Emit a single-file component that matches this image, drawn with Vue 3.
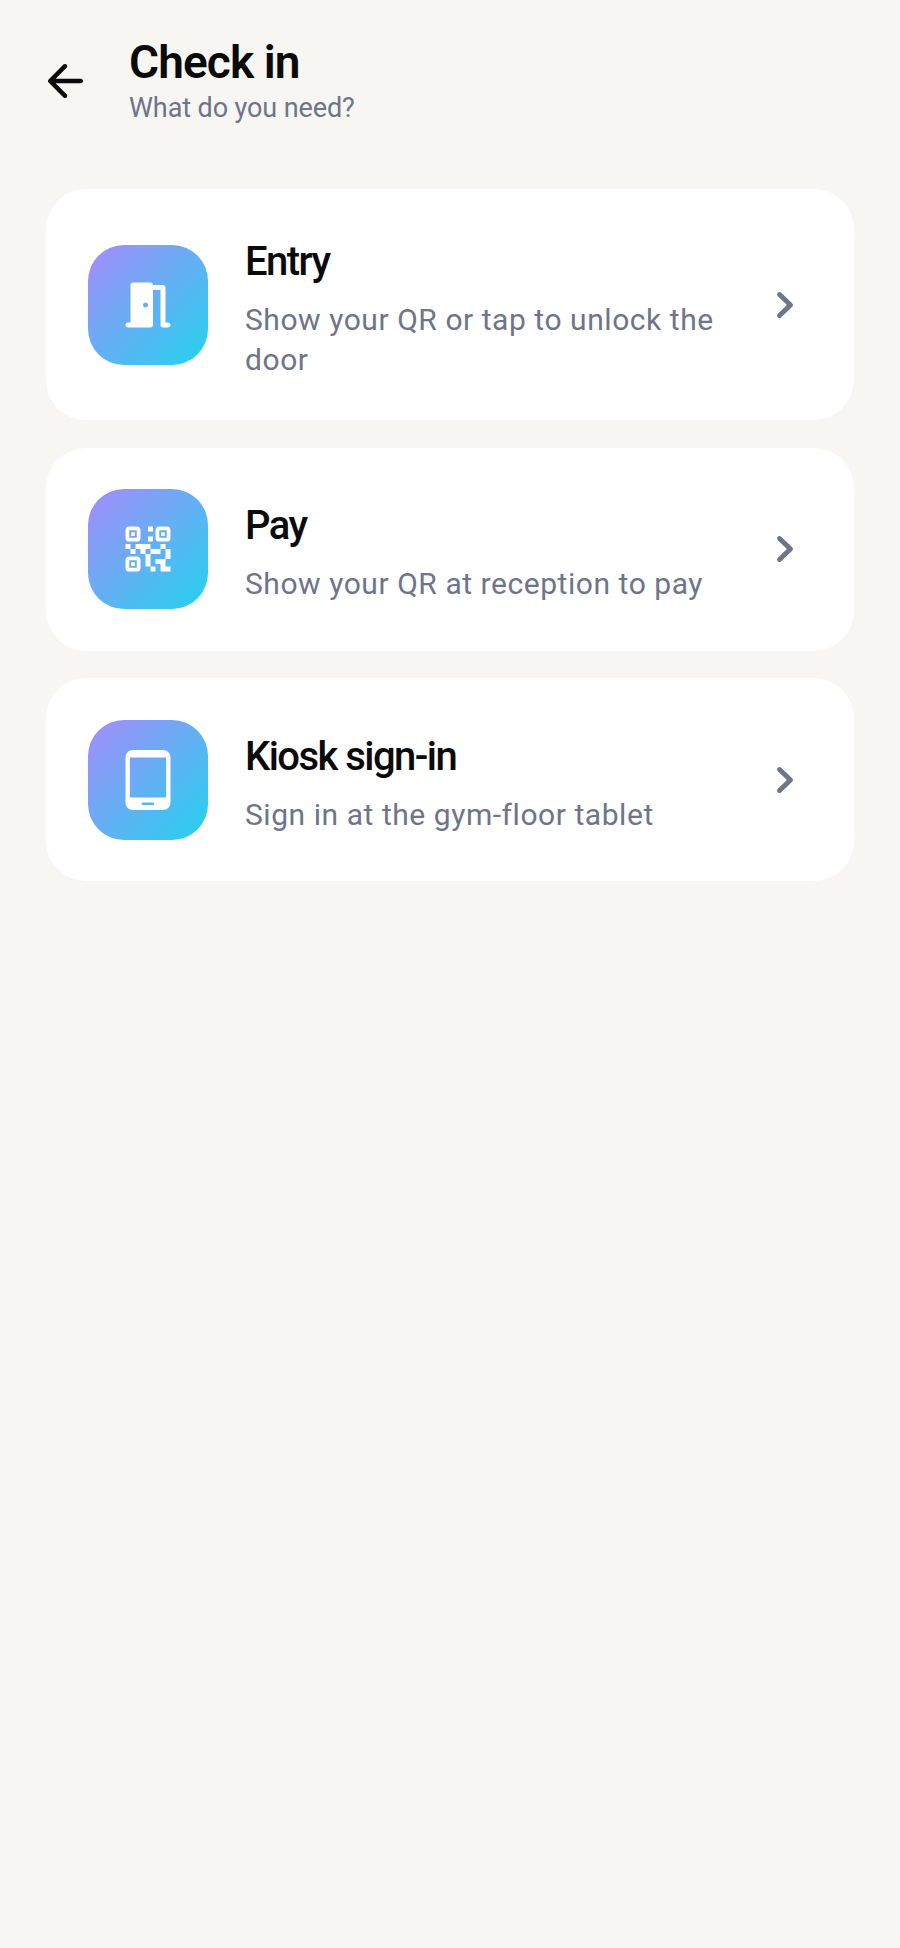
<script setup>
const rows = [
  { title: 'Entry', sub: 'Show your QR or tap to unlock the door', icon: 'door' },
  { title: 'Pay', sub: 'Show your QR at reception to pay', icon: 'qr' },
  { title: 'Kiosk sign-in', sub: 'Sign in at the gym-floor tablet', icon: 'tablet' },
]
</script>

<template>
  <main class="page">
    <header class="head">
      <svg class="back" viewBox="0 0 24 24" width="54" height="54" fill="#0a0a0a">
        <path d="M19 11H7.830l4.880-4.880c.390-.390.390-1.030 0-1.420-.390-.390-1.020-.390-1.410 0l-6.590 6.590c-.390.390-.390 1.020 0 1.410l6.590 6.590c.390.390 1.020.390 1.410 0 .390-.390.390-1.020 0-1.410L7.830 13H19c.550 0 1-.450 1-1s-.450-1-1-1z" />
      </svg>
      <div class="head-text">
        <h1>Check in</h1>
        <p>What do you need?</p>
      </div>
    </header>
    <section class="list">
      <article v-for="r in rows" :key="r.title" class="card">
        <div class="tile">
          <svg v-if="r.icon === 'door'" viewBox="0 0 24 24" width="60" height="60" fill="#fff">
            <path d="M20 19h-1V5c0-.550-.450-1-1-1h-4c0-.550-.450-1-1-1H6c-.550 0-1 .450-1 1v15H4c-.550 0-1 .450-1 1s.450 1 1 1h9c.550 0 1-.450 1-1V6h3v14c0 .550.450 1 1 1h2c.550 0 1-.450 1-1s-.450-1-1-1zm-9-6c-.550 0-1-.450-1-1s.450-1 1-1 1 .450 1 1-.450 1-1 1z" />
          </svg>
          <svg v-else-if="r.icon === 'qr'" viewBox="0 0 24 24" width="60" height="60" fill="#fff">
            <path d="M15 21h-2v-2h2zM13 14h-2v5h2zM21 12h-2v4h2zM19 10h-2v2h2zM7 12H5v2h2zM5 10H3v2h2zM12 5h2V3h-2zM19 19v-3h-4v2h2v3h4v-2zM17 12h-4v2h4zM13 10H7v2h2v2h2v-2h2zM14 9V7h-2v2zM6.750 5.250h-1.500v1.500h1.500zM6.750 17.250h-1.500v1.500h1.500zM18.750 5.250h-1.500v1.500h1.500z" />
            <g fill="none" stroke="#fff" stroke-width="1.500">
              <rect x="3.750" y="3.750" width="4.500" height="4.500" rx=".8" />
              <rect x="15.750" y="3.750" width="4.500" height="4.500" rx=".8" />
              <rect x="3.750" y="15.750" width="4.500" height="4.500" rx=".8" />
            </g>
          </svg>
          <svg v-else viewBox="0 0 24 24" width="60" height="60" fill="#fff">
            <path d="M18 0H6C4.340 0 3 1.340 3 3v18c0 1.660 1.340 3 3 3h12c1.660 0 3-1.340 3-3V3c0-1.660-1.340-3-3-3zm-4 22h-4c-.280 0-.500-.220-.500-.500s.220-.500.500-.500h4c.280 0 .500.220.500.500s-.220.500-.500.500zm5.250-3H4.750V3h14.500v16z" />
          </svg>
        </div>
        <div class="body">
          <h2>{{ r.title }}</h2>
          <p>{{ r.sub }}</p>
        </div>
        <svg class="chev" viewBox="0 0 24 24" width="36" height="36" fill="none" stroke="#6e7489" stroke-width="3.300" stroke-linecap="round" stroke-linejoin="round">
          <path d="M8.350 5l7.300 7-7.300 7" />
        </svg>
      </article>
    </section>
  </main>
</template>

<style>
html, body { margin: 0; background: #f7f6f2; }
</style>

<style scoped>
.page {
  min-height: 1948px;
  box-sizing: border-box;
  background: #f7f6f2;
  padding: 36px 46px 0;
  font-family: Roboto, "Noto Sans", sans-serif;
}
.head { display: flex; align-items: center; gap: 37px; height: 90px; }
.back { flex: none; margin-left: -8px; }
h1 { margin: 0; font-size: 46px; line-height: 53px; font-weight: 600; letter-spacing: -0.9px; color: #0a0a0a; }
.head-text p { margin: 2px 0 0; font-size: 27px; line-height: 35px; color: #6e7489; letter-spacing: -0.1px; }
.list { display: flex; flex-direction: column; gap: 27.500px; margin-top: 63px; }
.card {
  display: flex;
  align-items: center;
  gap: 37px;
  background: #fff;
  border-radius: 40px;
  padding: 41.500px 42px;
}
.tile {
  flex: none;
  width: 120px;
  height: 120px;
  border-radius: 36px;
  background: linear-gradient(135deg, #a78bfa, #22d3ee);
  display: flex;
  align-items: center;
  justify-content: center;
}
.body { flex: 1; min-width: 0; margin: -1px 0; }
h2 { margin: 0 0 6px; font-size: 40px; line-height: 64px; font-weight: 500; letter-spacing: -1.550px; color: #0a0a0a; }
.body p { margin: 0; font-size: 30px; line-height: 40px; color: #6e7489; letter-spacing: 0.550px; }
.chev { flex: none; margin-left: 8px; margin-right: 9px; }
</style>
